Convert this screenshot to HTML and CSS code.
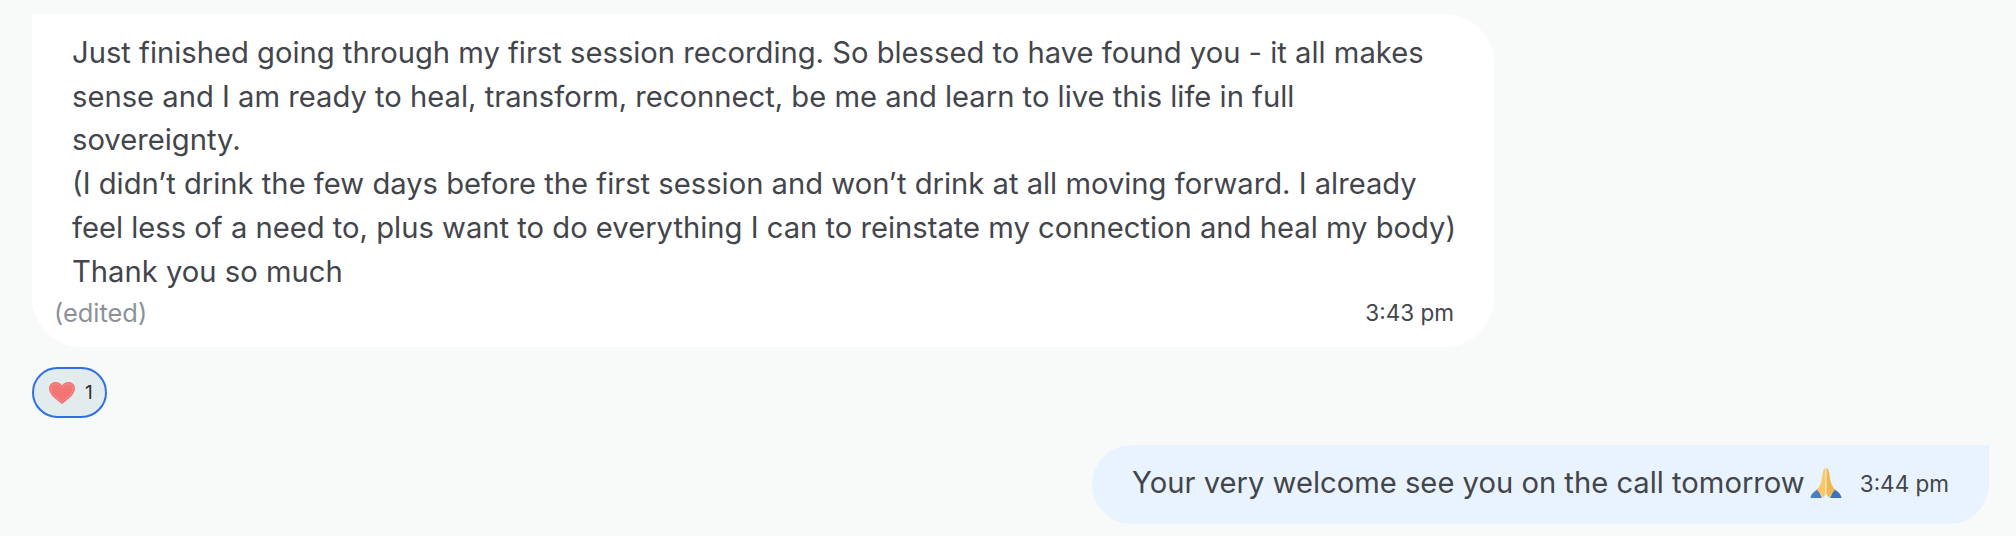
FILE: index.html
```html
<!DOCTYPE html>
<html lang="en">

<head>
    <meta charset="UTF-8">
    <title>Chat</title>
    <link rel="stylesheet" href="styles.css">
</head>

<body>
    <div class="chat">
        <div class="bubble incoming">
            <p class="text">Just finished going through my first session recording. So blessed to have found you - it all makes<br>sense and I am ready to heal, transform, reconnect, be me and learn to live this life in full<br>sovereignty.<br>(I didn’t drink the few days before the first session and won’t drink at all moving forward. I already<br>feel less of a need to, plus want to do everything I can to reinstate my connection and heal my body)<br>Thank you so much</p>
            <div class="meta">
                <span class="edited">(edited)</span>
                <span class="time">3:43 pm</span>
            </div>
        </div>
        <div class="reaction">
            <svg class="heart" viewBox="0 0 28 24" width="28" height="24">
                <path d="M14 23C9 19 1 14 1 7.500C1 3.500 4 1 7.500 1C10.500 1 12.800 2.500 14 4.500C15.200 2.500 17.500 1 20.500 1C24 1 27 3.500 27 7.500C27 14 19 19 14 23Z" fill="#f27474" />
                <path d="M14 20.500C10 17.500 3 13.500 3 7.800C3 4.800 5.200 3 7.800 3C10.500 3 12.800 4.800 14 7C15.200 4.800 17.500 3 20.200 3C22.800 3 25 4.800 25 7.800C25 13.500 18 17.500 14 20.500Z" fill="none" stroke="#f89a9a" stroke-width="0.700" />
            </svg>
            <span>1</span>
        </div>
        <div class="bubble outgoing">
            <span class="text">Your very welcome see you on the call tomorrow</span>
            <svg class="pray" viewBox="0 0 32 32" width="32" height="32">
                <path d="M0.500 31C1 27 4 24.500 8 22L12 31Z" fill="#4a7fc4" />
                <path d="M31.500 31C31 27 28 24.500 24 22L20 31Z" fill="#3f72b8" />
                <path d="M15.500 1C13.500 1.500 12.500 6 12 11C11.500 16 9.500 20 7 23C9 25 12 28 13 31L15.500 27Z" fill="#fbc863" />
                <path d="M16.500 1C18.500 1.500 19.500 6 20 11C20.500 16 22.500 20 25 23C23 25 20 28 19 31L16.500 27Z" fill="#f2b54f" />
            </svg>
            <span class="time">3:44 pm</span>
        </div>
    </div>
</body>

</html>
```

FILE: styles.css
```css
* {
    box-sizing: border-box;
}

html,
body {
    height: 100%;
}

body {
    margin: 0;
    background-color: #f8faf9;
    color: #42454b;
    font-family: "Inter", sans-serif;
    overflow: hidden;
}

.chat {
    display: flex;
    flex-direction: column;
    padding: 14px 27px 0 32px;
}

.bubble {
    background-color: #fff;
}

.incoming {
    width: 1462px;
    padding: 17px 40px 16px 22px;
    border-radius: 0 50px 50px 50px;
}

.text {
    margin: 0;
    font-size: 29.200px;
    line-height: 43.700px;
    white-space: nowrap;
}

.incoming .text {
    padding-left: 18px;
}

.meta {
    display: flex;
    justify-content: space-between;
    align-items: center;
    height: 38px;
}

.edited {
    font-size: 25.400px;
    color: #8c9199;
}

.time {
    font-size: 22.500px;
}

.reaction {
    display: flex;
    align-items: center;
    gap: 9px;
    width: 75px;
    height: 51px;
    margin-top: 20px;
    padding-left: 14px;
    border: 2px solid #2f6fe4;
    border-radius: 26px;
    background-color: #e2ecef;
    color: #2a2d33;
    font-size: 19px;
}

.outgoing {
    display: flex;
    align-items: center;
    align-self: flex-end;
    height: 79px;
    margin-top: 27px;
    padding: 0 40px 3px;
    background-color: #e8f3fd;
    border-radius: 40px 0 40px 40px;
}

.pray {
    margin-left: 5px;
}

.outgoing .time {
    margin-left: 18px;
}
```
